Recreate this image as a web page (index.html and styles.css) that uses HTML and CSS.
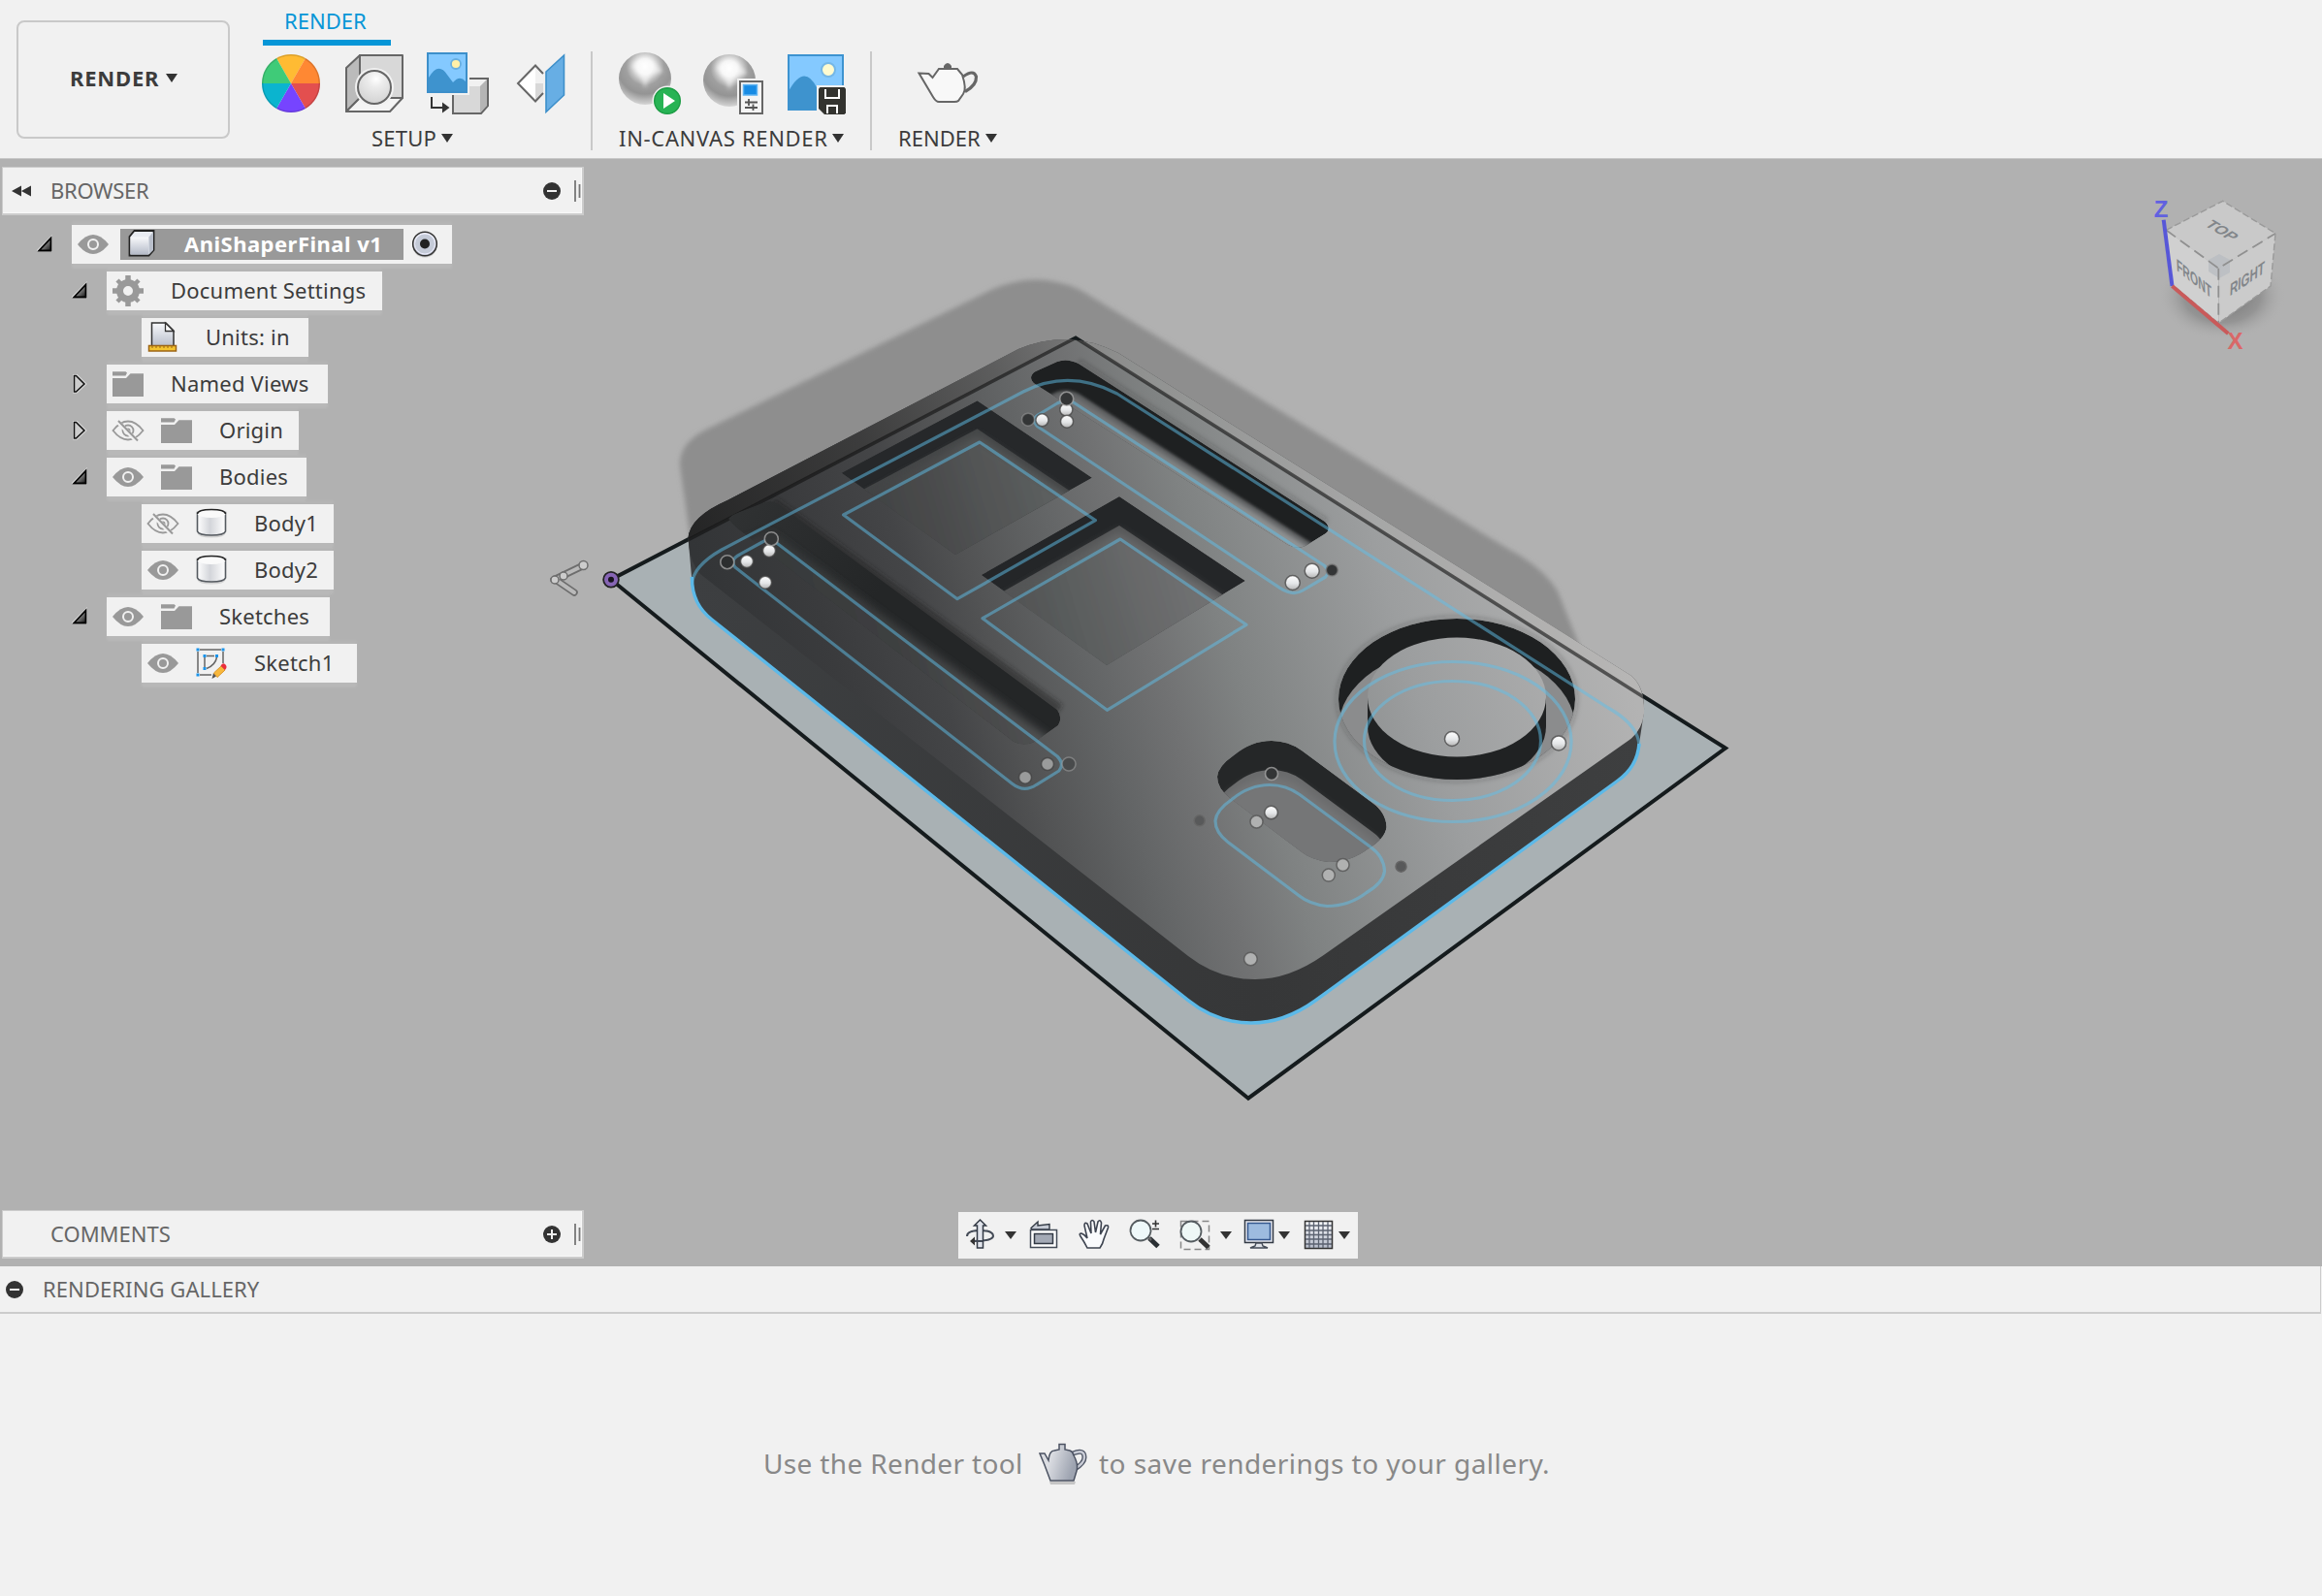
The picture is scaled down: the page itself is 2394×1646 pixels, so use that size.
FILE: index.html
```html
<!DOCTYPE html>
<html lang="en">
<head>
<meta charset="utf-8">
<title>Render workspace</title>
<link rel="stylesheet" href="styles.css">
</head>
<body>
<svg class="defs" width="0" height="0" aria-hidden="true">
  <defs>
    <radialGradient id="ball" cx=".5" cy=".27" r=".75"><stop offset="0" stop-color="#fff"/><stop offset=".2" stop-color="#f0f0f0"/><stop offset=".48" stop-color="#a0a0a0"/><stop offset=".7" stop-color="#949494"/><stop offset="1" stop-color="#dcdcdc"/></radialGradient>
    <radialGradient id="pearl" cx=".55" cy=".25" r=".8"><stop offset="0" stop-color="#fff"/><stop offset=".3" stop-color="#ececec"/><stop offset="1" stop-color="#d0d0d0"/></radialGradient>
    <linearGradient id="steel" x1="0" y1="0" x2="0" y2="1"><stop offset="0" stop-color="#f8f9fb"/><stop offset="1" stop-color="#b4bac8"/></linearGradient>
    <linearGradient id="cyl" x1="0" x2="1" y1="0" y2="0"><stop offset="0" stop-color="#fff"/><stop offset=".45" stop-color="#d3d5da"/><stop offset="1" stop-color="#fff"/></linearGradient>
    <linearGradient id="tw" x1="0" x2="1" y1="0" y2="1"><stop offset="0" stop-color="#eee"/><stop offset="1" stop-color="#111"/></linearGradient>
    <linearGradient id="tin" x1="0" x2="1" y1="0" y2=".3"><stop offset="0" stop-color="#d6d8dd"/><stop offset=".35" stop-color="#dcdee3"/><stop offset="1" stop-color="#9da3b0"/></linearGradient>
    <symbol id="eye" viewBox="0 0 44 40"><path d="M6 20Q14 10 22 10T38 20Q30 30 22 30T6 20Z" fill="#999"/><circle cx="22" cy="20" r="5" fill="none" stroke="#f1f1f1" stroke-width="2"/></symbol>
    <symbol id="eye-off" viewBox="0 0 44 40"><g fill="none" stroke="#999" stroke-width="1.800"><path d="M6.500 20Q14 10.500 22 10.500T37.500 20Q30 29.500 22 29.500T6.500 20Z"/><circle cx="22" cy="20" r="5.500"/><circle cx="22" cy="20" r="1.600"/></g><path d="M11.500 11L31 31" stroke="#f1f1f1" stroke-width="4.500"/><path d="M12 10L32 30.500" stroke="#999" stroke-width="2"/></symbol>
    <symbol id="folder" viewBox="0 0 44 40"><path d="M6 11.500V7.200H19.500L21 8.500L19.500 11.500Z M6 33V14H20L24.500 9.200H38V33Z" fill="#999"/></symbol>
    <symbol id="cylinder" viewBox="0 0 44 40"><path d="M7.500 9V30Q9 34.500 22 34.500T36.500 30V9" fill="#999" opacity=".35"/><path d="M7.500 8.500V28Q9 32 22 32T36.500 28V8.500Z" fill="url(#cyl)" stroke="#555a60" stroke-width="1.600"/><ellipse cx="22" cy="9.500" rx="14.500" ry="4.500" fill="#fafafa"/><path d="M7.500 10Q8 5.500 22 5.500T36.500 10" fill="none" stroke="#222" stroke-width="1.500"/></symbol>
    <symbol id="open" viewBox="0 0 16 40"><path d="M1.500 26.500L15 13V26.500Z" fill="url(#tw)" stroke="#ddd" stroke-width="3"/><path d="M2.200 26.500L14.500 13.500V26.500Z" fill="url(#tw)" stroke="#000" stroke-width="1.800"/></symbol>
    <symbol id="closed" viewBox="0 0 16 40"><path d="M2.500 11.500V28L5 28L13.500 20L5 11.500Z" fill="#ccc" stroke="#ddd" stroke-width="3"/><path d="M2.500 11.500V28H4.500L13 20L4.500 11.500Z" fill="#ccc" stroke="#111" stroke-width="1.500"/></symbol>
  </defs>
</svg>

<header class="toolbar">
  <button class="workspace">RENDER<i class="caret"></i></button>
  <div class="ribbon">
    <div class="tabs"><span class="tab">RENDER</span></div>
    <div class="groups">
      <div class="group setup">
        <div class="icons">
          <svg width="86" height="72" viewBox="264 50 86 72"><g><path d="M300 86L285 60A30 30 0 0 1 315 60Z" fill="#ffbb33"/><path d="M300 86L315 60A30 30 0 0 1 330 86Z" fill="#ff8833"/><path d="M300 86H330A30 30 0 0 1 315 112Z" fill="#e34f4f"/><path d="M300 86L315 112A30 30 0 0 1 285 112Z" fill="#7644ff"/><path d="M300 86L285 112A30 30 0 0 1 270 86Z" fill="#0bb4cf"/><path d="M300 86H270A30 30 0 0 1 285 60Z" fill="#3fcb78"/></g><circle cx="300" cy="86" r="29.300" fill="none" stroke="#000" stroke-opacity=".14" stroke-width="1.400"/></svg>
          <svg width="86" height="72" viewBox="350 50 86 72"><g stroke="#666" stroke-width="2" stroke-linejoin="round"><path d="M371 57H415V101H371Z" fill="#d8d8d8"/><path d="M357 70L371 57V101L357 115Z" fill="#bbb"/><path d="M357 115L371 101H415L402 115Z" fill="#f4f4f4"/></g><circle cx="386" cy="90" r="20" fill="#f1f1f1"/><circle cx="386" cy="90" r="17" fill="url(#pearl)" stroke="#666" stroke-width="2"/></svg>
          <svg width="86" height="72" viewBox="436 50 86 72"><path d="M475 81H503V109L496 117H467V91Z" fill="#d8d8d8" stroke="#666" stroke-width="2"/><path d="M468 89L476 82H502L495 89Z" fill="#f1f1f1"/><path d="M495 89L502 82V109L495 116Z" fill="#b5b5b5"/><path d="M438 52H484V98H438Z" fill="#f1f1f1"/><path d="M441 55H481V95H441Z" fill="#84c9ff" stroke="#3d8fca" stroke-width="2"/><path d="M442 80Q452 63 461 77L467 85Q474 77 480 84V94H442Z" fill="#3e93ce"/><circle cx="470" cy="66" r="5" fill="#fff0a8" stroke="#69afdf" stroke-width="1.800"/><path d="M445 100V111H457" fill="none" stroke="#333" stroke-width="2"/><path d="M456 105.500L463.500 111L456 116.500Z" fill="#333"/></svg>
          <svg width="72" height="72" viewBox="522 50 72 72"><path d="M552 67L534 86L552 105L560 96V76Z" fill="#fff"/><path d="M552 86H560V96L552 104Z" fill="#d8d8d8"/><path d="M552 67V86H560V76Z" fill="#f1f1f1"/><path d="M560 76L552 67.500L534 86L552 104.500L560 96" fill="none" stroke="#666" stroke-width="2"/><path d="M563 74L581.500 57V98L563 115.500Z" fill="#67aee4" stroke="#3d8fca" stroke-width="1.600"/></svg>
        </div>
        <div class="label">SETUP<i class="caret"></i></div>
      </div>
      <div class="group canvas">
        <div class="icons">
          <svg width="86" height="72" viewBox="636 50 86 72"><circle cx="665" cy="81" r="27" fill="url(#ball)"/><path d="M651 68Q658 57 672 62L684 74L671 77L665 91L660 78Z" fill="#fff" opacity=".55" filter="blur(2px)"/><circle cx="688" cy="104" r="15.500" fill="#f1f1f1"/><circle cx="688" cy="104" r="13.300" fill="#27b354" stroke="#1c9c44" stroke-width="1.400"/><path d="M684 96V112L696 104Z" fill="#fff"/></svg>
          <svg width="86" height="72" viewBox="722 50 86 72"><circle cx="752" cy="83" r="27" fill="url(#ball)"/><path d="M738 70Q745 59 759 64L771 76L758 79L752 93L747 80Z" fill="#fff" opacity=".55" filter="blur(2px)"/><path d="M760 81H790V120H760Z" fill="#f1f1f1"/><path d="M763 84H786V117H763Z" fill="#f4f4f4" stroke="#666" stroke-width="2"/><path d="M766.500 87.500H780.500V98H766.500Z" fill="#178be4" stroke="#5fb4f2" stroke-width="1.500"/><path d="M768 105.500H781M768 111H781M772 102V109M776.500 107.500V114" stroke="#555" stroke-width="1.800"/></svg>
          <svg width="72" height="72" viewBox="808 50 72 72"><path d="M813 57H869V113H813Z" fill="#84c9ff" stroke="#3d93d0" stroke-width="2"/><path d="M813 94Q829 65 842 90V113H813Z" fill="#3e93ce"/><circle cx="854" cy="72" r="7" fill="#fffbd0" stroke="#75b7e6" stroke-width="2"/><path d="M842 88H874V120H842Z" fill="#f1f1f1"/><path d="M845.500 90H870.500L872 91.500V116.500L870.500 118H850L844 112V91.500Z" fill="#33332f"/><path d="M851 92V101H865V92M853 117V109H863V117" fill="none" stroke="#fff" stroke-width="2"/></svg>
        </div>
        <div class="label">IN-CANVAS RENDER<i class="caret"></i></div>
      </div>
      <div class="group final">
        <div class="icons">
          <svg width="80" height="72" viewBox="938 50 80 72"><g fill="none" stroke="#666" stroke-width="2"><path d="M947.500 75.500L957.500 76L961.500 80L968 71H987L992 77Q997 92 993 97L988 104Q987 105 984 105H968Q965 105 962 100Z" fill="#f8f8f8"/><path d="M993 79Q1004 71 1006.500 79Q1007 88 995 94.500" stroke-width="3.200"/></g><path d="M973 71V68Q977 62 981 68V71Z" fill="#666"/></svg>
        </div>
        <div class="label">RENDER<i class="caret"></i></div>
      </div>
    </div>
  </div>
</header>

<main class="viewport">
  <svg class="scene" width="2394" height="1142" viewBox="0 164 2394 1142">
    <defs>
      <linearGradient id="face" gradientUnits="userSpaceOnUse" x1="726" y1="600" x2="1574" y2="346"><stop offset="0" stop-color="#333537"/><stop offset=".12" stop-color="#3a3b3d"/><stop offset=".23" stop-color="#444547"/><stop offset=".3" stop-color="#525354"/><stop offset=".4" stop-color="#636566"/><stop offset=".48" stop-color="#717273"/><stop offset=".56" stop-color="#7f8282"/><stop offset=".76" stop-color="#9c9e9f"/><stop offset="1" stop-color="#b3b3b3"/></linearGradient>
      <linearGradient id="floor" gradientUnits="userSpaceOnUse" x1="726" y1="600" x2="1574" y2="346"><stop offset="0" stop-color="#323435"/><stop offset=".2" stop-color="#3d3f40"/><stop offset=".3" stop-color="#4b4c4d"/><stop offset=".42" stop-color="#5b5e5e"/><stop offset=".5" stop-color="#68696a"/><stop offset=".65" stop-color="#7b7c7d"/><stop offset=".8" stop-color="#979899"/><stop offset="1" stop-color="#aaa"/></linearGradient>
      <linearGradient id="back" gradientUnits="userSpaceOnUse" x1="710" y1="550" x2="1110" y2="350"><stop offset="0" stop-color="#222"/><stop offset=".45" stop-color="#3b3b3b"/><stop offset=".8" stop-color="#5c5c5c"/><stop offset="1" stop-color="#777"/></linearGradient>
      <linearGradient id="side" gradientUnits="userSpaceOnUse" x1="710" y1="0" x2="1690" y2="0"><stop offset="0" stop-color="#3d3f41"/><stop offset=".6" stop-color="#363738"/><stop offset="1" stop-color="#3e3f40"/></linearGradient>
      <linearGradient id="band" gradientUnits="userSpaceOnUse" x1="750" y1="520" x2="900" y2="620"><stop offset="0" stop-color="#303233"/><stop offset="1" stop-color="#242627"/></linearGradient>
      <filter id="soft1" x="-10%" y="-10%" width="120%" height="120%"><feGaussianBlur stdDeviation="1.500"/></filter>
      <filter id="soft2" x="-10%" y="-10%" width="120%" height="120%"><feGaussianBlur stdDeviation="2.500"/></filter>
      <filter id="soft6" x="-10%" y="-10%" width="120%" height="120%"><feGaussianBlur stdDeviation="5"/></filter>
      <path id="body" d="M709.500 555Q711 533 750 516L1050 360Q1102 338 1153 364L1682 697Q1696 709 1695 734L1690 767Q1689 791 1668 805L1356 1032Q1324 1055 1290 1055Q1254 1055 1225 1031.700L734 639Q713 622 713.500 600Z"/>
      <clipPath id="inBody"><use href="#body"/></clipPath>
      <path id="rslot" d="M1063 389Q1064 384 1070 382L1090 373Q1100 369 1112 375L1366 538Q1373 545 1367 550L1346 563Q1338 567 1328 562L1067 396Q1063 393 1063 389Z"/>
      <path id="lslot" d="M751 535Q754 531 765 527L788 518Q796 515 804 521L1090 732Q1096 740 1091 748L1070 763Q1058 771 1045 765L760 545Q754 540 751 535Z"/>
      <path id="sq1" d="M867.600 487.700L1007.600 413.300L1126 492.700L985 572Z"/>
      <path id="sq2" d="M1011.700 593L1154 512L1284 599L1141 686Z"/>
      <path id="pill" d="M1255 801Q1256 790 1272 779Q1290 764 1311 764Q1328 764 1342 774L1415 828Q1429 838 1429.500 853Q1428 865 1411 875Q1393 889 1370 889Q1352 887 1341 878L1268 823Q1255 813 1255 801Z"/>
      <ellipse id="hole" cx="1502" cy="721" rx="122" ry="83"/>
      <clipPath id="c1"><use href="#rslot"/></clipPath><clipPath id="c2"><use href="#lslot"/></clipPath><clipPath id="c3"><use href="#sq1"/></clipPath><clipPath id="c4"><use href="#sq2"/></clipPath><clipPath id="c5"><use href="#pill"/></clipPath><clipPath id="c6"><use href="#hole"/></clipPath>
      <radialGradient id="cubeShade"><stop offset="0" stop-color="#555" stop-opacity=".75"/><stop offset=".6" stop-color="#777" stop-opacity=".5"/><stop offset="1" stop-color="#b1b1b1" stop-opacity="0"/></radialGradient>
      <linearGradient id="bead" x1="0" x2="0" y1="0" y2="1"><stop offset="0" stop-color="#fff"/><stop offset=".55" stop-color="#e4e6e8"/><stop offset="1" stop-color="#b5b5b5"/></linearGradient>
    </defs>

    <!-- ground shadow and sketch plane -->
    <path d="M718 600L701 480Q700 457 728 443L1024 298Q1068 279 1112 298L1555 566Q1592 586 1606 610L1628 665L1600 700Z" fill="#8e8e8e" filter="url(#soft2)"/>
    <path d="M630 597.700L1109 348.500L1779 771.600L1287 1132.700Z" fill="#a9b1b4"/>
    <path d="M1287 1132.700L630 597.700L1109 348.500L1779 771.600Z" fill="none" stroke="#151b1d" stroke-width="4"/>

    <!-- solid body: side wall, then top face -->
    <use href="#body" fill="url(#side)"/>
    <path d="M709.500 555Q711 533 750 516L1050 360Q1102 338 1153 364L1682 697Q1696 709 1695 736Q1693 752 1682 761.600L1364 985.500Q1329 1010 1294 1010Q1256 1010 1225 986L722 592Q711 580 709.500 555Z" fill="url(#face)"/>
    <g clip-path="url(#inBody)">
      <path d="M709 556L1109 348.500L1090 330L700 510Z" fill="url(#back)" opacity=".85"/>
      <path d="M1109 348.500L1700 722V690L1140 340Z" fill="#c4c0bc" opacity=".25"/>
      <path d="M690 567L1109 348.500L1720 735" fill="none" stroke="#111" stroke-opacity=".6" stroke-width="3.600"/>
    </g>

    <!-- pockets -->
    <g clip-path="url(#inBody)" fill="none" stroke="#222" stroke-opacity=".2" stroke-width="6" filter="url(#soft2)"><use href="#hole"/><path d="M1112 373L1368 538"/><path d="M796 518L1092 732" stroke-width="12" stroke-opacity=".5"/></g>
    <g clip-path="url(#c1)"><use href="#rslot" fill="#1e2021"/><use href="#rslot" y="31" fill="#5c5d5e" filter="url(#soft1)"/><use href="#rslot" y="37" fill="url(#face)" filter="url(#soft2)"/></g>
    <g clip-path="url(#c2)"><use href="#lslot" fill="url(#band)"/><use href="#lslot" y="33" x="-3" fill="url(#floor)" filter="url(#soft6)"/></g>
    <g clip-path="url(#c3)"><use href="#sq1" fill="#26282a"/><use href="#sq1" y="29" fill="#434546"/><use href="#sq1" y="36" fill="url(#floor)" filter="url(#soft6)"/></g>
    <g clip-path="url(#c4)"><use href="#sq2" fill="#242628"/><use href="#sq2" y="30" fill="#545556"/><use href="#sq2" y="36" fill="url(#floor)" filter="url(#soft6)"/></g>
    <g clip-path="url(#c5)"><use href="#pill" fill="#252728"/><use href="#pill" y="30" fill="#696a6b"/><use href="#pill" y="38" fill="#747677" filter="url(#soft6)"/></g>
    <g clip-path="url(#c6)"><use href="#hole" fill="#1e2021"/><use href="#hole" y="30" fill="#8b8c8d"/><path d="M1410 719V749A92 61 0 0 0 1594 749V719Z" fill="#202223"/></g>
    <ellipse cx="1502" cy="719" rx="92" ry="61.500" fill="url(#face)"/>

    <!-- sketch curves -->
    <g fill="none" stroke="#5fbfe9" stroke-opacity=".5" stroke-width="3.200" stroke-linejoin="round">
      <path d="M713.400 603Q714 584 744 567L1055 404Q1102 380 1151.700 406L1658 730Q1690 748 1690 770"/>
      <path d="M1070 440L1320 606.700Q1333 615 1343 609L1366.700 595Q1372 589 1365 583L1106.700 415Q1099 411 1090 416L1070 428Q1063 433 1070 440Z"/>
      <path d="M757.900 585L1043.600 808.300Q1056 818 1068.600 809.300L1091.800 795Q1098 788 1090 780L800.700 560Q793 554 786 559L763 571.700Q752 577 757.900 585Z"/>
      <path d="M869.600 531L1010 456L1129.400 536.700L987 617.700Z"/>
      <path d="M1013 637.700L1155 556L1285 644.300L1141.400 732.300Z"/>
      <use href="#pill" x="-2" y="45.500"/>
      <ellipse cx="1498" cy="765" rx="122" ry="82.500"/><ellipse cx="1497.500" cy="764" rx="91" ry="61.500"/>
    </g>
    <path d="M713.400 595Q713 623 734 639L1225 1031.700Q1254 1055 1290 1055Q1324 1055 1356 1032L1668 805Q1688 791 1690 767" fill="none" stroke="#5cb9e8" stroke-width="3.400"/>

    <!-- sketch points -->
    <g fill="url(#bead)" stroke="#444" stroke-opacity=".75" stroke-width="1.500">
      <circle cx="1074.400" cy="433.300" r="6.500"/><circle cx="1099.300" cy="422.500" r="6.500"/><circle cx="1100" cy="434.700" r="6.500"/>
      <circle cx="793" cy="568" r="6.500"/><circle cx="770" cy="579" r="6.500"/><circle cx="789" cy="600.700" r="6.500"/>
      <circle cx="1352.700" cy="588.700" r="7.500"/><circle cx="1332.700" cy="601" r="7.500"/>
      <circle cx="1497" cy="762" r="7.500"/><circle cx="1607" cy="766.400" r="7.500"/><circle cx="1310.600" cy="838" r="6.800"/>
    </g>
    <g fill="#b0b1b1" stroke="#555" stroke-opacity=".8" stroke-width="1.500">
      <circle cx="1295.500" cy="847.500" r="6.500"/><circle cx="1384.500" cy="892" r="6.500"/><circle cx="1369.800" cy="902.600" r="6.500"/><circle cx="1289.400" cy="989" r="6.800"/>
    </g>
    <g fill="#9a9b9b" stroke="#444" stroke-opacity=".8" stroke-width="1.500"><circle cx="1080" cy="788" r="6.500"/><circle cx="1057" cy="801.700" r="6.500"/></g>
    <g fill="#333536" stroke="#aaa" stroke-opacity=".75" stroke-width="1.600">
      <circle cx="1099.700" cy="411.300" r="7"/><circle cx="1060" cy="432.700" r="6.500" stroke-opacity=".45"/><circle cx="795.300" cy="555.700" r="7"/><circle cx="749.800" cy="579.700" r="7" fill="#2c2e2f"/>
      <circle cx="1373.300" cy="588" r="6" stroke="#777"/><circle cx="1311" cy="798" r="6.500"/><circle cx="1102" cy="788" r="7" fill="#494b4c" stroke-opacity=".5"/>
    </g>
    <g fill="#58595a" stroke="#666" stroke-width="1.500"><circle cx="1236.700" cy="846.300" r="5.500"/><circle cx="1444.500" cy="893.700" r="5.500"/></g>

    <!-- origin marker -->
    <circle cx="630" cy="597.700" r="7" fill="#222" stroke="#222" stroke-width="3.500"/><circle cx="630" cy="597.700" r="5" fill="#17131c" stroke="#8765b5" stroke-width="4"/>
    <g fill="none" stroke-linecap="round"><path d="M571 598L602 583M573 598L592 611" stroke="#6d6d6d" stroke-width="7.500"/><path d="M571 598L602 583M573 598L592 611" stroke="#b9b9b9" stroke-width="4"/></g>
    <g fill="#ccc" stroke="#6d6d6d" stroke-width="1.500"><circle cx="572" cy="598" r="4"/><circle cx="581" cy="594" r="4"/><circle cx="601.500" cy="583" r="4.500"/></g>

    <!-- view cube -->
    <ellipse cx="2291" cy="305" rx="66" ry="46" fill="url(#cubeShade)"/>
    <path d="M2291.700 207.300L2346 240.700L2287.300 276.700L2233.300 237.300Z" fill="#c9c9c9"/>
    <path d="M2233.300 237.300L2287.300 276.700V333.300L2240 294Z" fill="#d0d0d0"/>
    <path d="M2346 240.700L2287.300 276.700V333.300L2341 295Z" fill="#cbcbcb"/>
    <path d="M2277 268L2288 262L2299 268V281L2288 287L2277 280Z" fill="#b9bdc2" opacity=".8"/>
    <path d="M2233.300 237.300L2287.300 276.700L2346 240.700M2287.300 276.700V333.300" fill="none" stroke="#909090" stroke-width="1.800" stroke-dasharray="12 6"/>
    <path d="M2233.300 237.300L2291.700 207.300L2346 240.700L2341 295L2287.300 333.300L2240 294" fill="none" stroke="#9a9a9a" stroke-width="1.400" stroke-dasharray="7 3"/>
    <g class="cube-text"><text transform="matrix(.8 .48 -.8 .5 2291 237.500)" text-anchor="middle" y="6">TOP</text><text transform="matrix(.62 .5 .05 1.050 2262 287)" text-anchor="middle" y="6">FRONT</text><text transform="matrix(.68 -.46 -.05 1.050 2317 287)" text-anchor="middle" y="6">RIGHT</text></g>
    <path d="M2230.700 226.700L2239.500 295" stroke="#5757d8" stroke-width="4"/>
    <path d="M2239.500 295L2297.300 344" stroke="#c95a5a" stroke-width="4"/>
    <text class="axis z" x="2228" y="223.500" text-anchor="middle">Z</text>
    <text class="axis x" x="2304.500" y="360" text-anchor="middle">X</text>
  </svg>

  <section class="browser">
    <div class="panel">
      <svg width="24" height="16" viewBox="0 0 24 16"><path d="M1 8L11 2.500V13.500ZM11 8L21 2.500V13.500Z" fill="#333"/></svg>
      <h2>BROWSER</h2>
      <svg class="toggle" width="20" height="20" viewBox="0 0 20 20"><circle cx="10" cy="10" r="9" fill="#333"/><path d="M5 10H15" stroke="#f1f1f1" stroke-width="2"/></svg>
      <svg width="8" height="22" viewBox="0 0 8 22"><path d="M1 0V22M5.500 4V18" stroke="#777" stroke-width="1.800"/></svg>
    </div>
    <ul class="tree">
      <li class="l0 root"><svg class="tw"><use href="#open"/></svg><div class="item"><svg class="ic"><use href="#eye"/></svg><div class="selected"><svg width="44" height="32" viewBox="0 4 44 32"><path d="M9.500 12L14.500 6H34.500V26L29.500 31.500H9.500Z" fill="#e9ecf2" stroke="#222" stroke-width="1.800"/><path d="M10.500 12.500H29V30.500H10.500Z" fill="url(#steel)"/><path d="M29.500 12.500L34 7V26L29.500 30.500Z" fill="#b9bfcb"/></svg><b>AniShaperFinal v1</b></div><svg class="ic" viewBox="0 0 44 40"><circle cx="22" cy="20.500" r="13" fill="#999" opacity=".5"/><circle cx="22" cy="19.500" r="12.300" fill="url(#steel)" stroke="#333" stroke-width="1.500"/><circle cx="22" cy="19.500" r="10.500" fill="#c5cbd8" stroke="#eef" stroke-width="1"/><circle cx="22" cy="19.500" r="5" fill="#222"/></svg></div></li>
      <li class="l1 w-settings"><svg class="tw"><use href="#open"/></svg><div class="item"><svg class="ic" viewBox="0 0 44 40"><circle cx="22" cy="20" r="8.500" fill="none" stroke="#999" stroke-width="7"/><g stroke="#999" stroke-width="5.500"><path d="M22 4V10M22 30V36M6 20H12M32 20H38"/><path stroke-width="4.500" d="M11 9L15 13M29 27L33 31M33 9L29 13M15 27L11 31"/></g></svg><span>Document Settings</span></div></li>
      <li class="l2 w-units"><div class="item"><svg class="ic" viewBox="0 0 44 40"><path d="M10.500 5H25L33 13V31H10.500Z" fill="url(#steel)" stroke="#333" stroke-width="1.500"/><path d="M24.500 5V13.500H33Z" fill="#fff" stroke="#333" stroke-width="1.300"/><path d="M7.500 28.500H35.500V34H7.500Z" fill="#f4c430" stroke="#9c6414" stroke-width="1.500"/><path d="M11 29V31M15 29V31M19 29V31M23 29V31M27 29V31M31 29V31" stroke="#9c6414"/></svg><span>Units: in</span></div></li>
      <li class="l1 w-views"><svg class="tw"><use href="#closed"/></svg><div class="item"><svg class="ic"><use href="#folder"/></svg><span>Named Views</span></div></li>
      <li class="l1 w-origin"><svg class="tw"><use href="#closed"/></svg><div class="item"><svg class="ic"><use href="#eye-off"/></svg><svg class="ic"><use href="#folder"/></svg><span>Origin</span></div></li>
      <li class="l1 w-bodies"><svg class="tw"><use href="#open"/></svg><div class="item"><svg class="ic"><use href="#eye"/></svg><svg class="ic"><use href="#folder"/></svg><span>Bodies</span></div></li>
      <li class="l2 w-body"><div class="item"><svg class="ic"><use href="#eye-off"/></svg><svg class="ic"><use href="#cylinder"/></svg><span>Body1</span></div></li>
      <li class="l2 w-body"><div class="item"><svg class="ic"><use href="#eye"/></svg><svg class="ic"><use href="#cylinder"/></svg><span>Body2</span></div></li>
      <li class="l1 w-sketches"><svg class="tw"><use href="#open"/></svg><div class="item"><svg class="ic"><use href="#eye"/></svg><svg class="ic"><use href="#folder"/></svg><span>Sketches</span></div></li>
      <li class="l2 w-sketch"><div class="item"><svg class="ic"><use href="#eye"/></svg><svg class="ic" viewBox="0 0 44 40"><g fill="none" stroke="#666" stroke-width="1.500"><path d="M8 8V30M10 6H32M34 8V20M10 32H22"/><path d="M15 14V24M17 12.500H25M27.500 14Q26 22 17 25.500"/></g><path d="M6.500 4.500h3v3h-3zM32.500 4.500h3v3h-3zM6.500 30.500h3v3h-3zM13.500 11h3v3h-3zM26 11h3v3h-3zM13.500 24h3v3h-3z" fill="#1a93ea"/><path d="M22.500 36L24 30L27 33.500Z" fill="#555"/><path d="M24.500 30L32 23L36 27L28 34.500Z" fill="#f8b83c" stroke="#d8952a"/><path d="M31.500 22.500Q35 18 37.500 23Q38 25 36 27Z" fill="#ea2d3c"/></svg><span>Sketch1</span></div></li>
    </ul>
  </section>

  <footer class="dock">
    <div class="panel">
      <h2>COMMENTS</h2>
      <svg class="toggle" width="20" height="20" viewBox="0 0 20 20"><circle cx="10" cy="10" r="9" fill="#333"/><path d="M5 10H15M10 5V15" stroke="#f1f1f1" stroke-width="2"/></svg>
      <svg width="8" height="22" viewBox="0 0 8 22"><path d="M1 0V22M5.500 4V18" stroke="#777" stroke-width="1.800"/></svg>
    </div>
    <nav class="navbar">
      <svg width="66" height="48" viewBox="988 1250 66 48"><path d="M997 1275Q997 1269 1010.500 1269T1024 1275Q1023 1280 1003 1280" fill="none" stroke="#444b57" stroke-width="2"/><path d="M1007.500 1287V1264H1004.500L1010.500 1258L1016.500 1264H1013.500V1287Z" fill="#e2e5ec" stroke="#333a45" stroke-width="1.500"/><path d="M1013 1280L1003 1280" stroke="#444b57" stroke-width="2"/><path d="M1000 1280L1005 1275.500V1284.500Z" fill="#333"/><path d="M1036 1270H1048L1042 1278Z" fill="#333"/></svg>
      <svg width="48" height="48" viewBox="1054 1250 48 48"><path d="M1063 1266.500L1070 1260V1264L1082 1262.500V1268H1064Z" fill="#c5cad4" stroke="#333a45" stroke-width="1.400"/><path d="M1062.500 1268.500H1089.500V1286.500H1062.500Z" fill="#fff" stroke="#444b57" stroke-width="1.500"/><path d="M1066.500 1272.500H1085.500V1282.500H1066.500Z" fill="#a4aab6" stroke="#333a45" stroke-width="1.500"/></svg>
      <svg width="54" height="48" viewBox="1102 1250 54 48"><path d="M1121 1287Q1118 1281 1114 1275Q1112 1272 1115 1272Q1118 1273 1121 1277L1118 1264Q1118 1260 1121 1262L1125 1272L1124.500 1260Q1126 1257 1128 1260L1129.500 1271L1132 1260Q1134 1257 1135.500 1261L1134.500 1273L1139.500 1264Q1143 1263 1142.500 1266L1138 1278Q1137 1283 1134 1287Z" fill="#fafbfd" stroke="#3e4450" stroke-width="1.600"/></svg>
      <svg width="52" height="48" viewBox="1156 1250 52 48"><path d="M1185 1277L1194 1285.500" stroke="#2a2f33" stroke-width="5"/><path d="M1182 1274L1187 1279" stroke="#666" stroke-width="2.500"/><circle cx="1176" cy="1269" r="10.500" fill="#eef8f9" stroke="#555c60" stroke-width="1.800"/><path d="M1188 1262H1195M1191.500 1258.500V1265.500M1188 1267.500H1195" stroke="#333" stroke-width="1.600"/></svg>
      <svg width="70" height="48" viewBox="1208 1250 70 48"><path d="M1217.500 1259.500H1246.500V1288.500H1217.500Z" fill="none" stroke="#888" stroke-width="1.500" stroke-dasharray="7 4"/><path d="M1237 1278L1246 1286.500" stroke="#333" stroke-width="5"/><circle cx="1228" cy="1270" r="10.500" fill="#eef8f6" stroke="#555c60" stroke-width="1.800"/><path d="M1258 1270H1270L1264 1278Z" fill="#333"/></svg>
      <svg width="60" height="48" viewBox="1278 1250 60 48"><path d="M1283.500 1258.500H1312.500V1281.500H1283.500Z" fill="#e8eaf0" stroke="#333a45" stroke-width="1.500"/><path d="M1286.500 1261.500H1309.500V1278.500H1286.500Z" fill="#9dbbdf" stroke="#35588f" stroke-width="1.500"/><path d="M1295 1282H1301L1302 1285L1307 1287H1289L1294 1285Z" fill="#dfe2e8" stroke="#444b57" stroke-width="1.400"/><path d="M1318 1270H1330L1324 1278Z" fill="#333"/></svg>
      <svg width="62" height="48" viewBox="1338 1250 62 48"><path d="M1345.500 1259.500H1373.500V1287.500H1345.500Z" fill="url(#steel)" stroke="#333" stroke-width="1.500"/><path d="M1350 1260V1287M1354.500 1260V1287M1359.500 1260V1287M1364 1260V1287M1369 1260V1287M1346 1264H1373M1346 1269H1373M1346 1273.500H1373M1346 1278H1373M1346 1283H1373" stroke="#5b6270" stroke-width="1.300"/><path d="M1380 1270H1392L1386 1278Z" fill="#333"/></svg>
    </nav>
  </footer>
</main>

<section class="gallery">
  <div class="gallery-head"><svg width="20" height="20" viewBox="0 0 20 20"><circle cx="10" cy="10" r="9" fill="#333"/><path d="M5 10H15" stroke="#f1f1f1" stroke-width="2"/></svg><h2>RENDERING GALLERY</h2></div>
  <div class="empty">
    <span class="before">Use the Render tool</span>
    <svg width="52" height="48" viewBox="1070 1485 52 48"><path d="M1082 1528H1109L1108 1531H1083Z" fill="#999" opacity=".5"/><path d="M1106 1499Q1118 1494 1118 1503Q1118 1509 1108 1515" fill="none" stroke="#4b5262" stroke-width="5"/><path d="M1106 1499Q1118 1494 1118 1503Q1118 1509 1108 1515" fill="none" stroke="#c9ccd6" stroke-width="2.400"/><path d="M1092 1495V1489.500H1098V1495L1103 1496Q1106 1497 1107 1501Q1112 1510 1110 1517L1107 1527H1083L1077 1511L1072 1499L1077 1499L1081 1506Q1082 1496 1087 1496Z" fill="url(#tin)" stroke="#4b5262" stroke-width="1.500"/></svg>
    <span class="after">to save renderings to your gallery.</span>
  </div>
</section>
</body>
</html>
```
FILE: styles.css
```css
* { box-sizing: border-box; }
body {
  margin: 0;
  width: 2394px;
  height: 1646px;
  display: flex;
  flex-direction: column;
  overflow: hidden;
  background: #f1f1f1;
  color: #3c3c3c;
  font: 22px/40px "Noto Sans", "Open Sans", sans-serif;
}
svg { display: block; flex: none; }
.defs { position: absolute; }
h2 { margin: 0; font-size: 22px; font-weight: 400; color: #666; }

.toolbar {
  height: 164px;
  flex: none;
  display: flex;
  padding-left: 17px;
  border-bottom: 1px solid #c8c8c8;
}
.workspace {
  width: 220px;
  height: 122px;
  margin-top: 21px;
  padding: 0 0 5px 53px;
  display: flex;
  align-items: center;
  border: 2px solid #c9c9c9;
  border-radius: 8px;
  background: none;
  color: #3c3c3c;
  font: 700 22px/40px "Noto Sans", sans-serif;
  letter-spacing: .8px;
}
.caret {
  border: 6px solid transparent;
  border-top: 9px solid #333;
  border-bottom: 0;
  margin-left: 5px;
}
.workspace .caret { margin-left: 7px; margin-top: 2px; }
.ribbon { margin-left: 27px; }
.tabs { height: 47px; padding-left: 7px; display: flex; }
.tab {
  width: 132px;
  height: 47px;
  line-height: 42px;
  padding-left: 22px;
  border-bottom: 6px solid #0696d7;
  color: #0696d7;
}
.groups { display: flex; }
.group { height: 108px; padding-top: 3px; position: relative; }
.icons { display: flex; }
.label { display: flex; align-items: center; height: 40px; white-space: nowrap; }
.setup { width: 347px; }
.setup .label { padding-left: 119px; letter-spacing: .2px; }
.canvas { width: 288px; padding-left: 25px; }
.canvas .label { padding-left: 2px; letter-spacing: .68px; }
.canvas .caret { margin-left: 4px; }
.final { padding-left: 39px; }
.final .label { margin-left: -12px; }
.canvas::before, .final::before {
  content: "";
  position: absolute;
  left: -2px;
  top: 6px;
  width: 2px;
  height: 102px;
  background: #c9c9c9;
}

.viewport {
  position: relative;
  height: 1142px;
  flex: none;
  display: flex;
  flex-direction: column;
  justify-content: space-between;
  padding: 8px 0 8px 2px;
  background: #b1b1b1;
}
.scene { position: absolute; left: 0; top: 0; }
.browser, .dock { position: relative; }
.panel {
  width: 600px;
  height: 50px;
  display: flex;
  align-items: center;
  padding: 0 0 0 8px;
  background: #f1f1f1;
  border: 1px solid #ccc;
  border-right: 2px solid #ccc;
  border-bottom: 2px solid #ccc;
  box-shadow: inset -1px -1px 0 #f8f8f8;
}
.panel h2 { margin-left: 17px; line-height: 44px; padding-bottom: 2px; }
.browser .panel h2 { letter-spacing: -.3px; }
.toggle { margin: 0 13px 0 auto; }
.tree { list-style: none; margin: 10px 0 0; padding: 0; }
.tree li { display: flex; height: 40px; margin-bottom: 8px; }
.tw { width: 16px; height: 40px; margin-right: 20px; }
.l0 { padding-left: 36px; }
.l1 { padding-left: 72px; }
.l2 { padding-left: 144px; }
.item {
  display: flex;
  align-items: center;
  height: 40px;
  background: #f1f1f1;
  box-shadow: 0 5px 2px rgba(241, 241, 241, .1), 0 -4px 2px rgba(241, 241, 241, .07);
  white-space: nowrap;
}
.ic { width: 44px; height: 40px; }
.ic + .ic { margin-left: 6px; }
.item span { margin-left: 22px; line-height: 38px; padding-bottom: 2px; letter-spacing: .22px; }
.root .item { width: 392px; }
.w-settings .item { width: 284px; }
.w-units .item { width: 172px; }
.w-views .item { width: 228px; }
.w-origin .item { width: 198px; }
.w-bodies .item { width: 206px; }
.w-body .item { width: 198px; }
.w-sketches .item { width: 230px; }
.w-sketch .item { width: 222px; }
.selected {
  display: flex;
  align-items: center;
  width: 292px;
  height: 32px;
  margin-left: 6px;
  background: #999;
  color: #fff;
}
.selected b { margin-left: 22px; line-height: 30px; padding-bottom: 2px; letter-spacing: .48px; }

.dock { display: flex; align-items: flex-end; }
.dock .panel h2 { margin-left: 41px; }
.navbar { display: flex; width: 412px; height: 48px; margin-left: 386px; background: #f1f1f1; }

.gallery { flex: 1; display: flex; flex-direction: column; }
.gallery-head {
  height: 49px;
  flex: none;
  display: flex;
  align-items: center;
  gap: 19px;
  padding-left: 5px;
  margin-right: 1px;
  border-bottom: 2px solid #ccc;
  border-right: 1px solid #ccc;
}
.gallery-head h2 { line-height: 38px; padding-bottom: 2px; letter-spacing: .08px; }
.empty {
  display: flex;
  align-items: center;
  height: 48px;
  margin: 130px 0 0 787px;
  color: #888;
  font-size: 28px;
  white-space: nowrap;
}
.empty .before { width: 283px; letter-spacing: .35px; }
.empty .after { margin-left: 11px; letter-spacing: .46px; }
.cube-text { font: 700 17px "Liberation Sans", sans-serif; fill: #82868a; }
.axis { font: 700 24px "Liberation Sans", sans-serif; }
.axis.z { fill: #6161e0; }
.axis.x { fill: #d96868; }
```
